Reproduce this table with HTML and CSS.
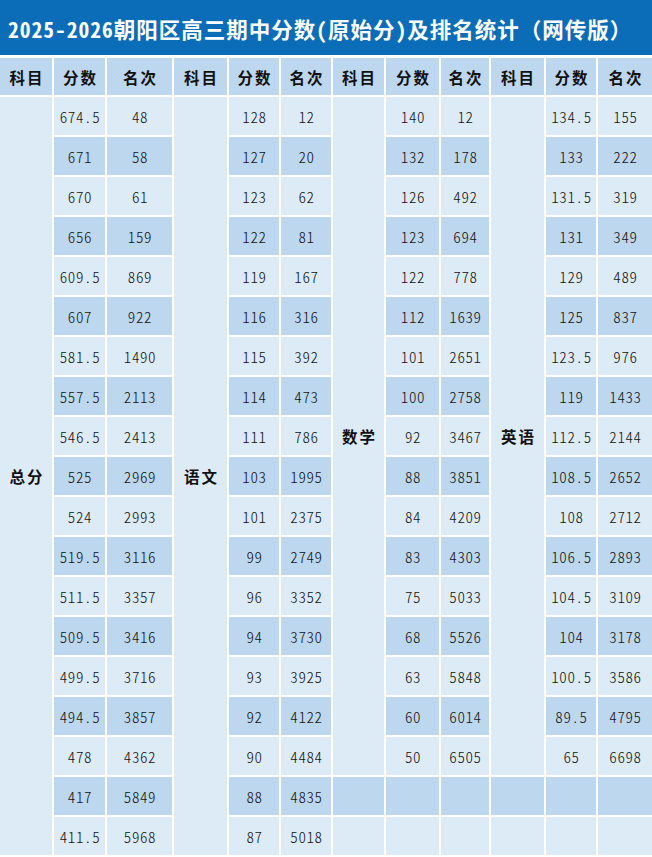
FILE: index.html
```html
<!DOCTYPE html>
<html lang="zh-CN">
<head>
<meta charset="utf-8">
<title>2025-2026朝阳区高三期中分数(原始分)及排名统计</title>
<link rel="stylesheet" href="styles.css">
</head>
<body>
<div class="title">2025-2026朝阳区高三期中分数(原始分)及排名统计<span class="fw">（网传版）</span></div>
<div class="grid" id="grid">
  <div class="h">科目</div><div class="h">分数</div><div class="h">名次</div>
  <div class="h">科目</div><div class="h">分数</div><div class="h">名次</div>
  <div class="h">科目</div><div class="h">分数</div><div class="h">名次</div>
  <div class="h">科目</div><div class="h">分数</div><div class="h">名次</div>

  <div class="subj c1 r19">总分</div>
  <div class="subj c4 r19">语文</div>
  <div class="subj c7 r17">数学</div>
  <div class="subj c10 r17">英语</div>

  <div class="n">674.5</div><div class="n">48</div><div class="n">128</div><div class="n">12</div><div class="n">140</div><div class="n">12</div><div class="n">134.5</div><div class="n">155</div>
  <div class="n d">671</div><div class="n d">58</div><div class="n d">127</div><div class="n d">20</div><div class="n d">132</div><div class="n d">178</div><div class="n d">133</div><div class="n d">222</div>
  <div class="n">670</div><div class="n">61</div><div class="n">123</div><div class="n">62</div><div class="n">126</div><div class="n">492</div><div class="n">131.5</div><div class="n">319</div>
  <div class="n d">656</div><div class="n d">159</div><div class="n d">122</div><div class="n d">81</div><div class="n d">123</div><div class="n d">694</div><div class="n d">131</div><div class="n d">349</div>
  <div class="n">609.5</div><div class="n">869</div><div class="n">119</div><div class="n">167</div><div class="n">122</div><div class="n">778</div><div class="n">129</div><div class="n">489</div>
  <div class="n d">607</div><div class="n d">922</div><div class="n d">116</div><div class="n d">316</div><div class="n d">112</div><div class="n d">1639</div><div class="n d">125</div><div class="n d">837</div>
  <div class="n">581.5</div><div class="n">1490</div><div class="n">115</div><div class="n">392</div><div class="n">101</div><div class="n">2651</div><div class="n">123.5</div><div class="n">976</div>
  <div class="n d">557.5</div><div class="n d">2113</div><div class="n d">114</div><div class="n d">473</div><div class="n d">100</div><div class="n d">2758</div><div class="n d">119</div><div class="n d">1433</div>
  <div class="n">546.5</div><div class="n">2413</div><div class="n">111</div><div class="n">786</div><div class="n">92</div><div class="n">3467</div><div class="n">112.5</div><div class="n">2144</div>
  <div class="n d">525</div><div class="n d">2969</div><div class="n d">103</div><div class="n d">1995</div><div class="n d">88</div><div class="n d">3851</div><div class="n d">108.5</div><div class="n d">2652</div>
  <div class="n">524</div><div class="n">2993</div><div class="n">101</div><div class="n">2375</div><div class="n">84</div><div class="n">4209</div><div class="n">108</div><div class="n">2712</div>
  <div class="n d">519.5</div><div class="n d">3116</div><div class="n d">99</div><div class="n d">2749</div><div class="n d">83</div><div class="n d">4303</div><div class="n d">106.5</div><div class="n d">2893</div>
  <div class="n">511.5</div><div class="n">3357</div><div class="n">96</div><div class="n">3352</div><div class="n">75</div><div class="n">5033</div><div class="n">104.5</div><div class="n">3109</div>
  <div class="n d">509.5</div><div class="n d">3416</div><div class="n d">94</div><div class="n d">3730</div><div class="n d">68</div><div class="n d">5526</div><div class="n d">104</div><div class="n d">3178</div>
  <div class="n">499.5</div><div class="n">3716</div><div class="n">93</div><div class="n">3925</div><div class="n">63</div><div class="n">5848</div><div class="n">100.5</div><div class="n">3586</div>
  <div class="n d">494.5</div><div class="n d">3857</div><div class="n d">92</div><div class="n d">4122</div><div class="n d">60</div><div class="n d">6014</div><div class="n d">89.5</div><div class="n d">4795</div>
  <div class="n">478</div><div class="n">4362</div><div class="n">90</div><div class="n">4484</div><div class="n">50</div><div class="n">6505</div><div class="n">65</div><div class="n">6698</div>
  <div class="n d">417</div><div class="n d">5849</div><div class="n d">88</div><div class="n d">4835</div><div class="n d"></div><div class="n d"></div><div class="n d"></div><div class="n d"></div><div class="n d"></div><div class="n d"></div>
  <div class="n">411.5</div><div class="n">5968</div><div class="n">87</div><div class="n">5018</div><div class="n"></div><div class="n"></div><div class="n"></div><div class="n"></div><div class="n"></div><div class="n"></div>
</div>
</body>
</html>
```
FILE: styles.css
```css
html, body {
  margin: 0;
  padding: 0;
  background: #ffffff;
}
body {
  width: 652px;
  height: 857px;
  overflow: hidden;
  font-family: "Noto Sans CJK SC", "Noto Sans", sans-serif;
  font-feature-settings: "hwid";
  color: #1a1a1a;
}
.title {
  height: 55px;
  box-sizing: border-box;
  padding: 2px 0 0 8px;
  background: #0b6db7;
  color: #ffffff;
  font-weight: 700;
  font-size: 21.5px;
  letter-spacing: 1px;
  line-height: 53px;
  white-space: nowrap;
}
.fw {
  font-feature-settings: normal;
}
.grid {
  margin-top: 3px;
  display: grid;
  grid-template-columns: 52px 51px 65px 53px 50px 50px 51px 53px 48px 53px 50px 54px;
  grid-template-rows: 37px;
  grid-auto-rows: 38px;
  gap: 2px;
  background: #ffffff;
}
.grid > div {
  display: flex;
  align-items: center;
  justify-content: center;
  background: #ddebf7;
  white-space: nowrap;
}
.grid > .h {
  background: #bdd7ee;
  font-weight: 700;
  font-size: 15.5px;
  letter-spacing: 2px;
  padding-left: 2px;
  color: #111111;
}
.grid > .subj {
  font-weight: 700;
  font-size: 15.5px;
  letter-spacing: 2px;
  padding-left: 2px;
  color: #111111;
}
.c1 { grid-column: 1; }
.c4 { grid-column: 4; }
.c7 { grid-column: 7; }
.c10 { grid-column: 10; }
.r19 { grid-row: 2 / span 19; }
.r17 { grid-row: 2 / span 17; }
.grid > .n {
  font-size: 15px;
  font-weight: 300;
  letter-spacing: 0.6px;
  padding-left: 1px;
  color: #111111;
}
.grid > .d {
  background: #bdd7ee;
}
```
